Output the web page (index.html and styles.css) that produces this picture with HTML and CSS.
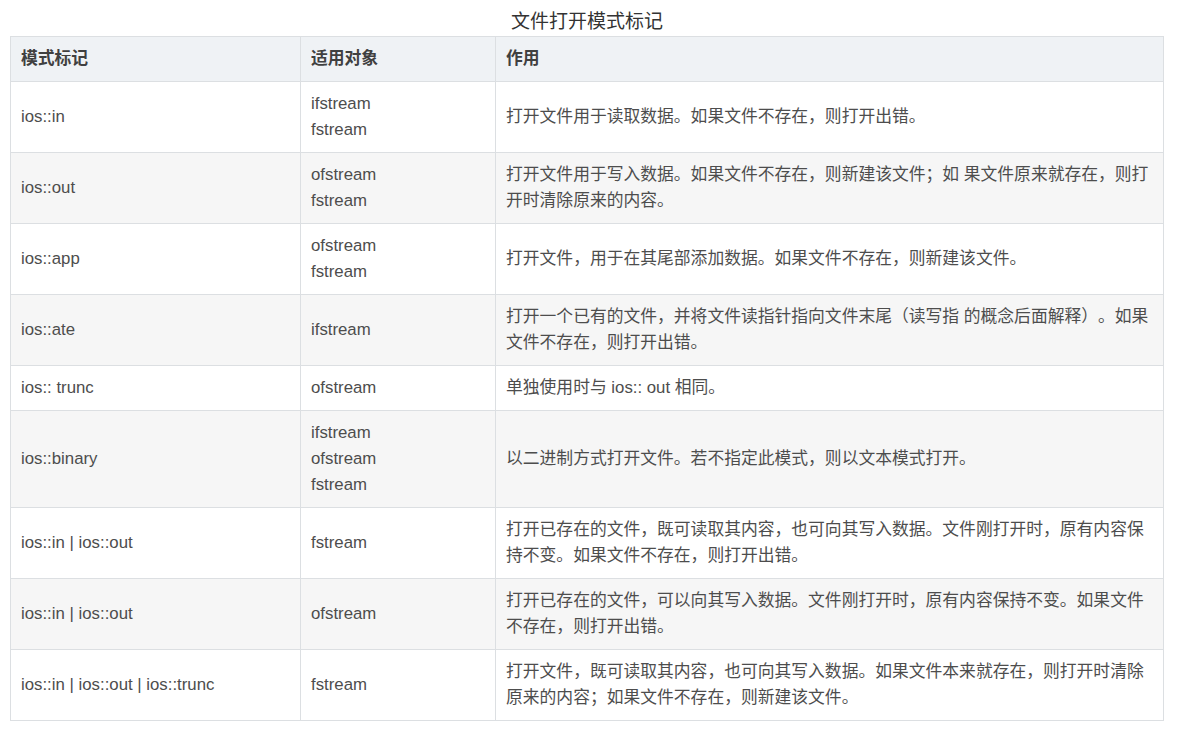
FILE: index.html
```html
<!DOCTYPE html>
<html lang="zh-CN">
<head>
<meta charset="utf-8">
<title>文件打开模式标记</title>
<link rel="stylesheet" href="styles.css">
</head>
<body>
<div class="page">
<table class="modes">
<caption class="modes-caption">文件打开模式标记</caption>
<thead>
<tr><th class="c1">模式标记</th><th class="c2">适用对象</th><th class="c3">作用</th></tr>
</thead>
<tbody>
<tr><td>ios::in</td><td>ifstream<br>fstream</td><td>打开文件用于读取数据。如果文件不存在，则打开出错。</td></tr>
<tr><td>ios::out</td><td>ofstream<br>fstream</td><td>打开文件用于写入数据。如果文件不存在，则新建该文件；如 果文件原来就存在，则打开时清除原来的内容。</td></tr>
<tr><td>ios::app</td><td>ofstream<br>fstream</td><td>打开文件，用于在其尾部添加数据。如果文件不存在，则新建该文件。</td></tr>
<tr><td>ios::ate</td><td>ifstream</td><td>打开一个已有的文件，并将文件读指针指向文件末尾（读写指 的概念后面解释）。如果文件不存在，则打开出错。</td></tr>
<tr><td>ios:: trunc</td><td>ofstream</td><td>单独使用时与 ios:: out 相同。</td></tr>
<tr><td>ios::binary</td><td>ifstream<br>ofstream<br>fstream</td><td>以二进制方式打开文件。若不指定此模式，则以文本模式打开。</td></tr>
<tr><td>ios::in | ios::out</td><td>fstream</td><td>打开已存在的文件，既可读取其内容，也可向其写入数据。文件刚打开时，原有内容保持不变。如果文件不存在，则打开出错。</td></tr>
<tr><td>ios::in | ios::out</td><td>ofstream</td><td>打开已存在的文件，可以向其写入数据。文件刚打开时，原有内容保持不变。如果文件不存在，则打开出错。</td></tr>
<tr><td>ios::in | ios::out | ios::trunc</td><td>fstream</td><td>打开文件，既可读取其内容，也可向其写入数据。如果文件本来就存在，则打开时清除原来的内容；如果文件不存在，则新建该文件。</td></tr>
</tbody>
</table>
</div>
</body>
</html>
```
FILE: styles.css
```css
html, body {
  margin: 0;
  padding: 0;
  background: #ffffff;
}
.page {
  padding: 8px 10px 0 10px;
  font-family: "Liberation Sans", Arial, "Noto Sans CJK SC", sans-serif;
  color: #4d4d4d;
  text-spacing-trim: space-all;
}
.modes {
  width: 1154px;
  border-collapse: collapse;
  table-layout: fixed;
  font-size: 16.8px;
  line-height: 26px;
}
.modes-caption {
  font-size: 19px;
  line-height: 28px;
  color: #333333;
  text-align: center;
}
.modes th,
.modes td {
  border: 1px solid #dcdfe2;
  padding: 9px 10px 9px 10px;
  text-align: left;
  vertical-align: middle;
}
.modes th {
  background: #eff2f5;
  color: #404040;
  font-weight: bold;
}
.modes .c1 { width: 269px; }
.modes .c2 { width: 174px; }
.modes .c3 { width: auto; }
.modes tbody tr:nth-child(even) td {
  background: #f6f6f6;
}
.modes tbody tr:nth-child(odd) td {
  background: #ffffff;
}
```
